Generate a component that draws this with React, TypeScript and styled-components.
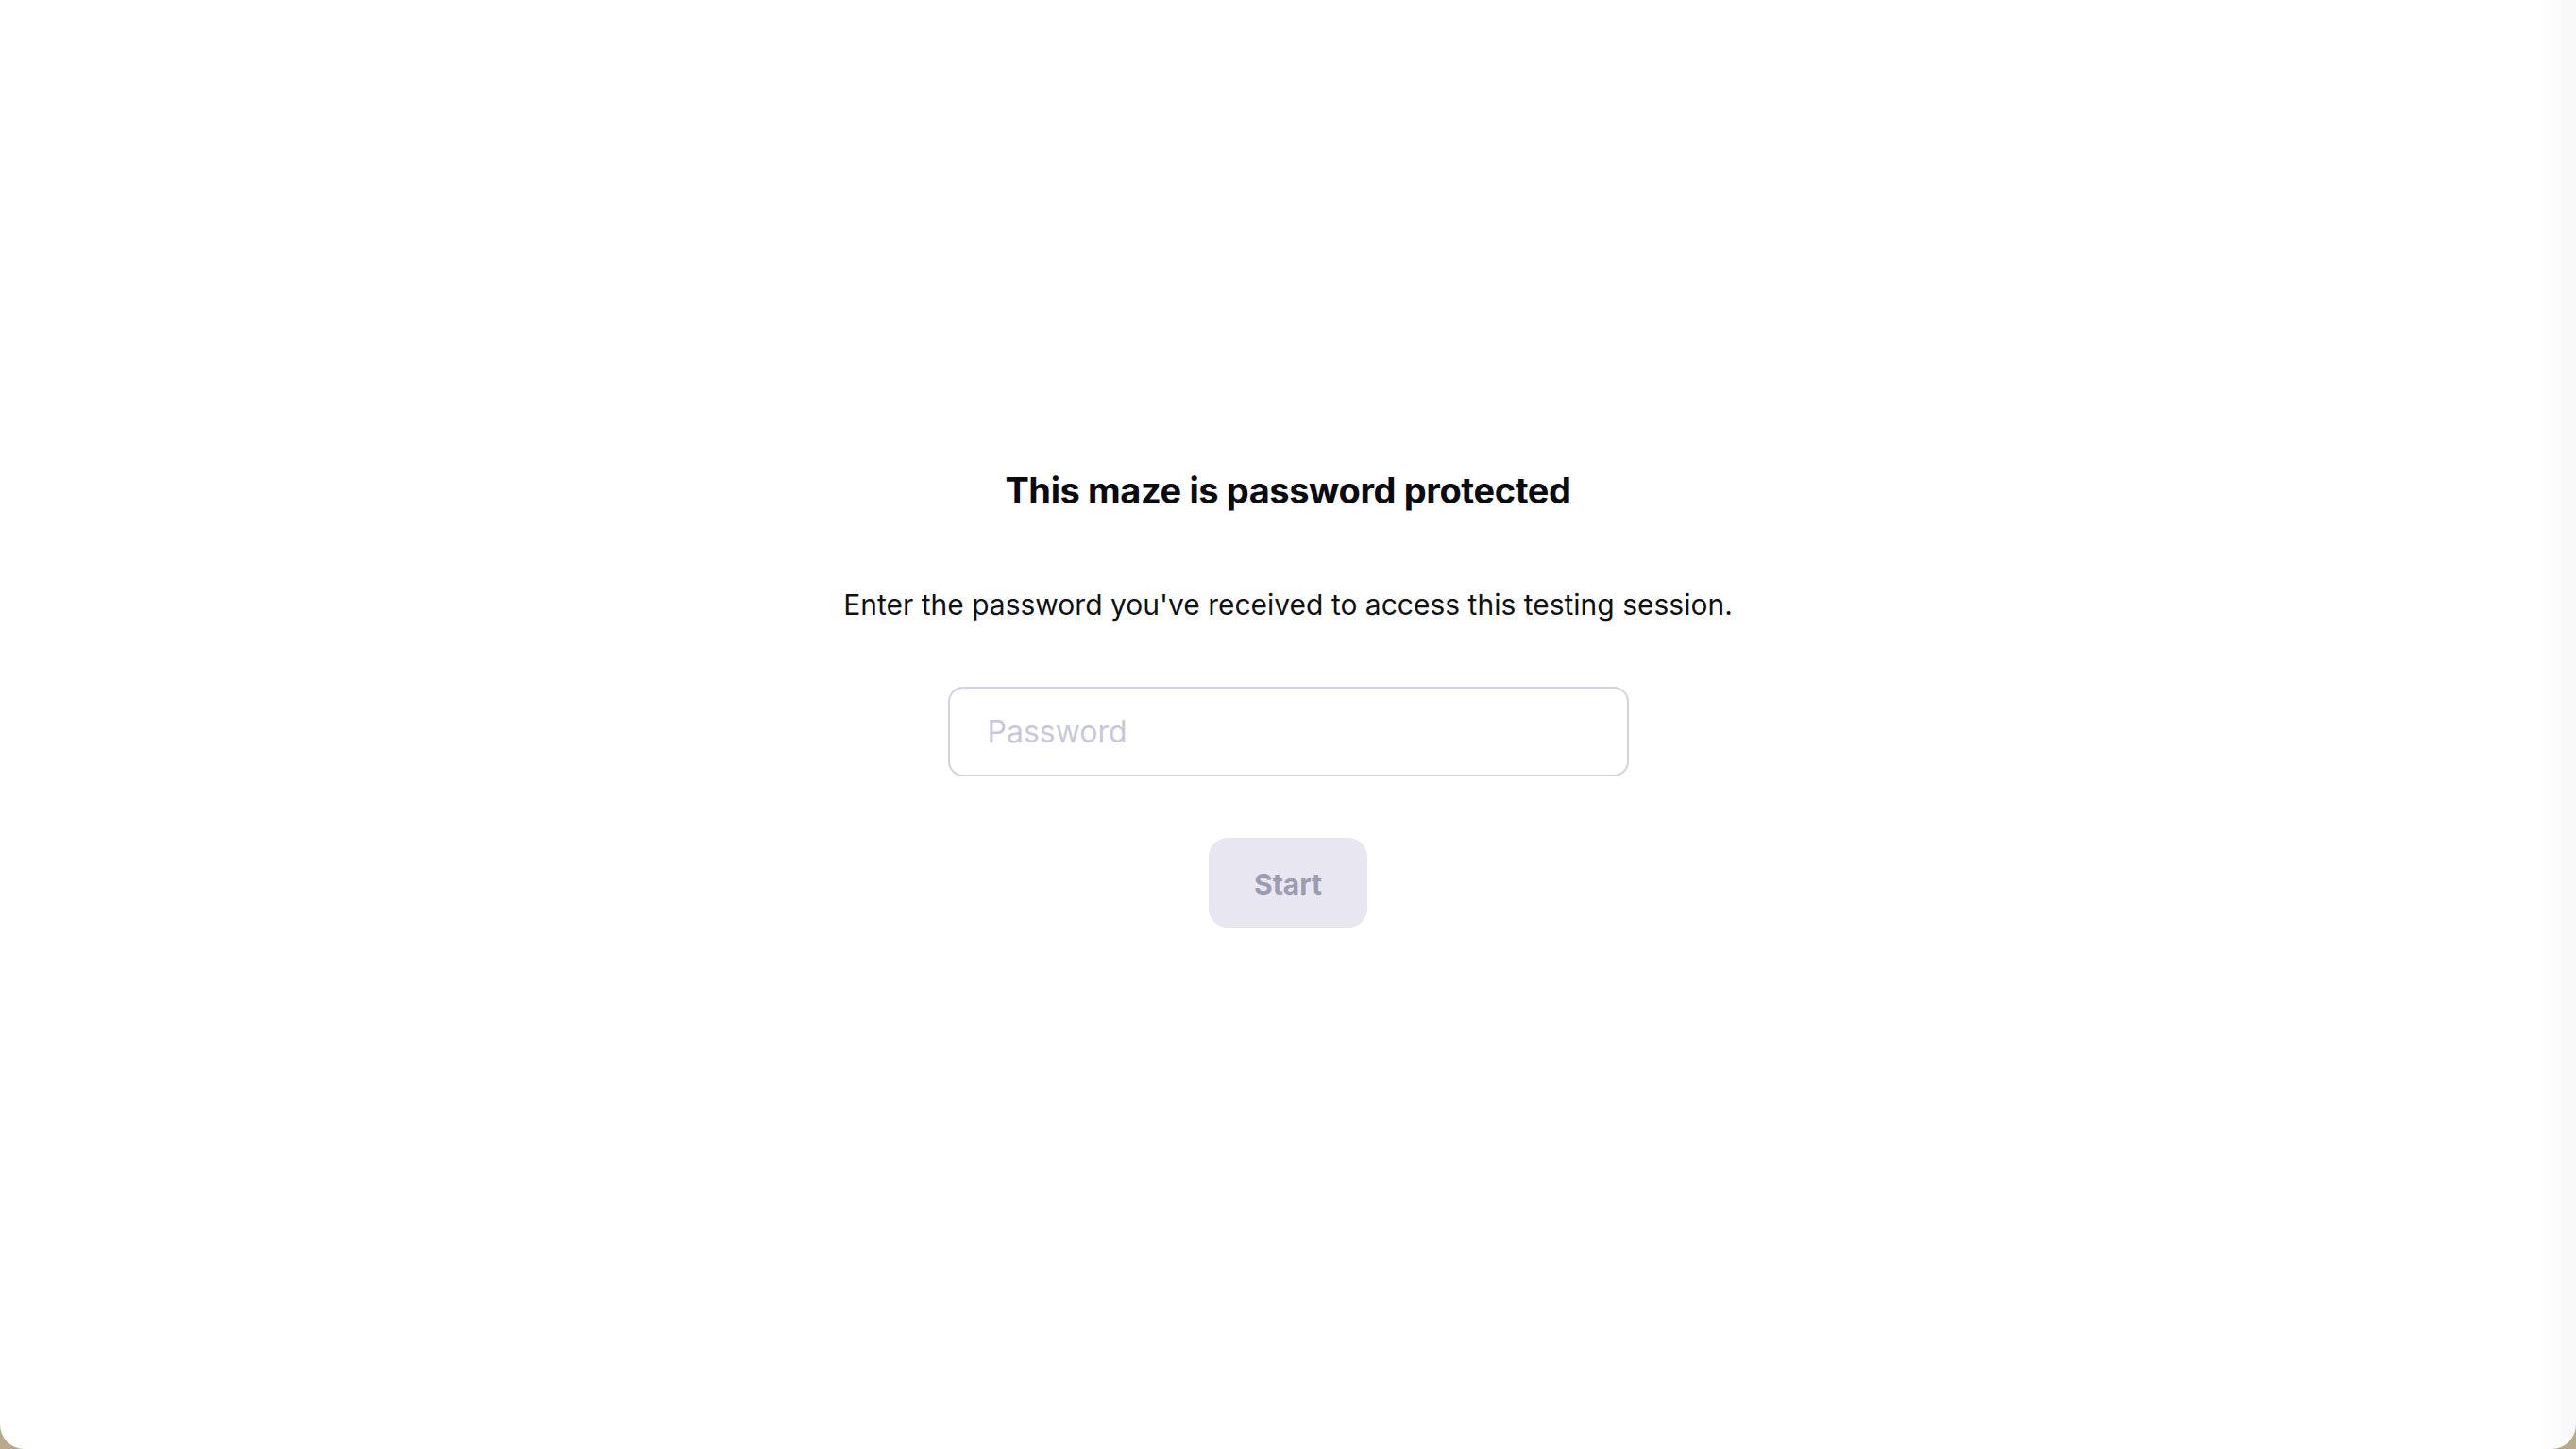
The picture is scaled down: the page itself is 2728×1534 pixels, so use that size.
import React from "react";
import styled, { createGlobalStyle } from "styled-components";

const GlobalStyle = createGlobalStyle`
  html, body {
    margin: 0;
    padding: 0;
    background: #b8a98b;
  }
  * {
    box-sizing: border-box;
  }
`;

const Page = styled.div`
  min-height: 100vh;
  background: linear-gradient(to right, #ffffff calc(100% - 38px), #fefefe calc(100% - 38px), #f8f8f8 100%);
  border-radius: 0 0 26px 26px;
  display: flex;
  flex-direction: column;
  align-items: center;
  padding-top: 496px;
  font-family: Inter, "Liberation Sans", sans-serif;
`;

const Title = styled.h1`
  margin: 0;
  font-size: 38px;
  line-height: 1.25;
  font-weight: 700;
  color: #0b0b0f;
  letter-spacing: -0.4px;
`;

const Lead = styled.p`
  margin: 78px 0 0;
  font-size: 30px;
  line-height: 1.25;
  font-weight: 400;
  color: #111114;
`;

const PasswordInput = styled.input`
  margin-top: 68px;
  width: 721px;
  height: 95px;
  border: 2px solid #d2d1df;
  border-radius: 16px;
  padding: 0 40px;
  font-family: inherit;
  font-size: 32px;
  color: #111114;
  outline: none;
  background: #fff;

  &::placeholder {
    color: #c9c8db;
  }
`;

const StartButton = styled.button`
  margin-top: 65px;
  width: 168px;
  height: 95px;
  border: none;
  border-radius: 20px;
  background: #e8e7f1;
  color: #9c9bb2;
  font-family: inherit;
  font-size: 30px;
  font-weight: 700;
  padding-top: 4px;
  cursor: not-allowed;
`;

const App = () => {
  return (
    <>
      <GlobalStyle />
      <Page>
        <Title>This maze is password protected</Title>
        <Lead>Enter the password you've received to access this testing session.</Lead>
        <PasswordInput type="password" placeholder="Password" />
        <StartButton disabled>Start</StartButton>
      </Page>
    </>
  );
};

export default App;
